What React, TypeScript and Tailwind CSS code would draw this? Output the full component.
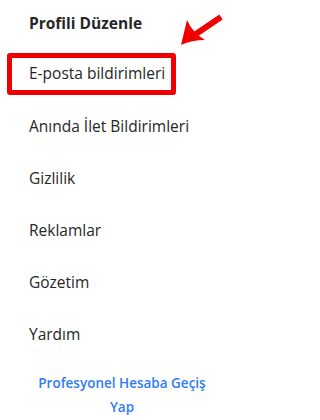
import React from "react";

const items = [
  "Anında İlet Bildirimleri",
  "Gizlilik",
  "Reklamlar",
  "Gözetim",
  "Yardım",
];

export default function App() {
  return (
    <div className="relative w-[225px] h-[420px] bg-white overflow-hidden" style={{ fontFamily: '"Open Sans", "Noto Sans", sans-serif' }}>
      <div className="flex flex-col">
        <div className="h-[52px] flex items-center pl-[29px] pb-[4px] text-[15.5px] font-bold text-[#262626]">Profili Düzenle</div>
        <div className="ml-[7px] w-[169px] h-[42px] border-[5px] border-[#f00000] rounded-[3px] flex items-center pl-[17px] text-[15.5px] text-[#262626] mt-[1px]">E-posta bildirimleri</div>
        <div className="flex flex-col mt-[6px]">
          {items.map((t) => (
            <div key={t} className="h-[52px] flex items-center pl-[29px] text-[15.5px] text-[#262626]">{t}</div>
          ))}
        </div>
        <div className="ml-[32px] w-[180px] mt-[10px] text-center text-[13.5px] leading-[24px] font-semibold text-[#2f7cf6]">
          Profesyonel Hesaba Geçiş Yap
        </div>
      </div>
      <svg className="absolute left-0 top-0" width="225" height="60" viewBox="0 0 225 60">
        <line x1="221" y1="17" x2="193" y2="36" stroke="#f00000" strokeWidth="6" strokeLinecap="butt" />
        <path d="M181,45 L187,20 Q192,32 205,40 Q192,40 181,45 Z" fill="#f00000" />
      </svg>
    </div>
  );
}
